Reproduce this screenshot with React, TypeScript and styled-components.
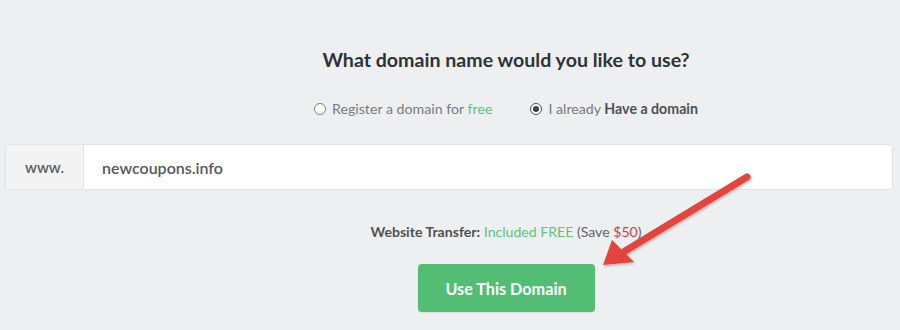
import React from "react";
import styled, { createGlobalStyle } from "styled-components";

const Global = createGlobalStyle`
  html, body { margin: 0; padding: 0; background: #eeeff1; }
  body { font-family: "Lato", "Liberation Sans", sans-serif; }
  * { box-sizing: border-box; }
`;

const Page = styled.div`
  position: relative;
  width: 900px;
  height: 330px;
  overflow: hidden;
  background: #eeeff1;
  padding: 48px 7px 0 5px;
  display: flex;
  flex-direction: column;
`;

const Center = styled.div`
  padding-left: 114px;
  display: flex;
  flex-direction: column;
  align-items: center;
`;

const Title = styled.h1`
  margin: 0;
  font-size: 19.6px;
  line-height: 24px;
  font-weight: 700;
  color: #2e3338;
`;

const Options = styled.div`
  margin-top: 28px;
  display: flex;
  gap: 38px;
`;

const Option = styled.label`
  display: flex;
  align-items: center;
  gap: 6px;
  font-size: 14.2px;
  color: #767b80;
`;

const Radio = styled.span<{ $checked?: boolean }>`
  width: 12px;
  height: 12px;
  border-radius: 50%;
  border: 1.5px solid ${(p) => (p.$checked ? "#4c5055" : "#7b7f84")};
  display: flex;
  align-items: center;
  justify-content: center;
  background: #fff;
  &::after {
    content: "";
    width: 6px;
    height: 6px;
    border-radius: 50%;
    background: ${(p) => (p.$checked ? "#3e4247" : "transparent")};
  }
`;

const Green = styled.span`
  color: #5ec47c;
`;

const Strong = styled.b`
  color: #4d5257;
  font-weight: 700;
`;

const InputGroup = styled.div`
  margin-top: 27px;
  height: 46px;
  display: flex;
  border: 1px solid #e1e2e4;
  border-radius: 3px;
  background: #fff;
`;

const Prefix = styled.div`
  width: 78px;
  display: flex;
  align-items: center;
  padding-left: 19px;
  background: #f3f3f4;
  border-right: 1px solid #e4e5e7;
  font-size: 15px;
  font-weight: 600;
  color: #5a5e63;
`;

const Field = styled.div`
  flex: 1;
  display: flex;
  align-items: center;
  padding-left: 18px;
  font-size: 16px;
  font-weight: 600;
  color: #55595e;
`;

const Transfer = styled.div`
  margin-top: 33px;
  font-size: 14.1px;
  color: #5f6469;
`;

const TransferLabel = styled.b`
  color: #4d5257;
  font-weight: 700;
`;

const Red = styled.span`
  color: #d33a45;
`;

const Button = styled.button`
  margin-top: 24px;
  width: 177px;
  height: 48px;
  border: none;
  border-radius: 4px;
  background: #52bd73;
  color: #fff;
  font-family: inherit;
  font-size: 16.2px;
  font-weight: 700;
  box-shadow: 0 1px 1px rgba(0, 0, 0, 0.08);
`;

const Arrow = styled.svg`
  position: absolute;
  left: 0;
  top: 0;
  pointer-events: none;
`;

export default function App() {
  return (
    <>
      <Global />
      <Page>
        <Center>
          <Title>What domain name would you like to use?</Title>
          <Options>
            <Option>
              <Radio />
              <span>
                Register a domain for <Green>free</Green>
              </span>
            </Option>
            <Option>
              <Radio $checked />
              <span>
                I already <Strong>Have a domain</Strong>
              </span>
            </Option>
          </Options>
        </Center>
        <InputGroup>
          <Prefix>www.</Prefix>
          <Field>newcoupons.info</Field>
        </InputGroup>
        <Center>
          <Transfer>
            <TransferLabel>Website Transfer:</TransferLabel> <Green>Included FREE</Green> (Save <Red>$50</Red>)
          </Transfer>
          <Button>Use This Domain</Button>
        </Center>
        <Arrow width="900" height="330" viewBox="0 0 900 330">
          <defs>
            <filter id="sh" x="-20%" y="-20%" width="140%" height="140%">
              <feDropShadow dx="1" dy="1.5" stdDeviation="1.2" floodColor="#000" floodOpacity="0.25" />
            </filter>
          </defs>
          <g filter="url(#sh)">
            <line x1="747" y1="177" x2="625" y2="251" stroke="#e2443c" strokeWidth="7" strokeLinecap="round" />
            <polygon points="603,265 612,240 634,262" fill="#e2443c" />
          </g>
        </Arrow>
      </Page>
    </>
  );
}
